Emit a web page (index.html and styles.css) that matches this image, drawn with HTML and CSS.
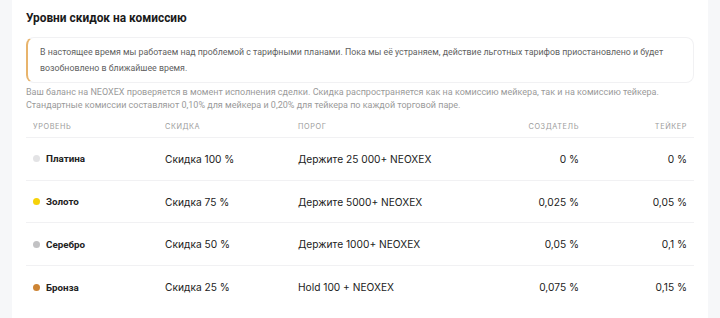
FILE: index.html
```html
<!DOCTYPE html>
<html lang="ru">
<head>
<meta charset="utf-8">
<link rel="stylesheet" href="styles.css">
</head>
<body>
<div class="page">
  <section class="card">
    <h2 class="title">Уровни скидок на комиссию</h2>
    <div class="alert">В настоящее время мы работаем над проблемой с тарифными планами. Пока мы её устраняем, действие льготных тарифов приостановлено и будет возобновлено в ближайшее время.</div>
    <p class="note">Ваш баланс на NEOXEX проверяется в момент исполнения сделки. Скидка распространяется как на комиссию мейкера, так и на комиссию тейкера. Стандартные комиссии составляют 0,10% для мейкера и 0,20% для тейкера по каждой торговой паре.</p>
    <div class="table">
      <div class="row head">
        <div class="cell">Уровень</div>
        <div class="cell">Скидка</div>
        <div class="cell">Порог</div>
        <div class="cell num">Создатель</div>
        <div class="cell num">Тейкер</div>
      </div>
      <div class="row">
        <div class="cell level"><span class="dot platinum"></span>Платина</div>
        <div class="cell">Скидка 100 %</div>
        <div class="cell">Держите 25 000+ NEOXEX</div>
        <div class="cell num">0 %</div>
        <div class="cell num">0 %</div>
      </div>
      <div class="row">
        <div class="cell level"><span class="dot gold"></span>Золото</div>
        <div class="cell">Скидка 75 %</div>
        <div class="cell">Держите 5000+ NEOXEX</div>
        <div class="cell num">0,025 %</div>
        <div class="cell num">0,05 %</div>
      </div>
      <div class="row">
        <div class="cell level"><span class="dot silver"></span>Серебро</div>
        <div class="cell">Скидка 50 %</div>
        <div class="cell">Держите 1000+ NEOXEX</div>
        <div class="cell num">0,05 %</div>
        <div class="cell num">0,1 %</div>
      </div>
      <div class="row last">
        <div class="cell level"><span class="dot bronze"></span>Бронза</div>
        <div class="cell">Скидка 25 %</div>
        <div class="cell">Hold 100 + NEOXEX</div>
        <div class="cell num">0,075 %</div>
        <div class="cell num">0,15 %</div>
      </div>
    </div>
  </section>
</div>
</body>
</html>
```
FILE: styles.css
```css
* { box-sizing: border-box; }
html, body { margin: 0; padding: 0; }
body {
  background: #f6f7f9;
  font-family: Roboto, "Noto Sans", sans-serif;
  color: #1e1e1e;
  height: 318px;
  overflow: hidden;
}
.page {
  padding: 0 12px;
  height: 100%;
}
.card {
  background: #fff;
  height: 100%;
  padding: 10px 14px 0 14px;
}
.title {
  margin: 0;
  font-size: 11.9px;
  font-weight: 700;
  line-height: 16px;
  color: #1a1a1a;
}
.alert {
  margin-top: 11px;
  border: 1px solid #f1f1f3;
  border-left: 2px solid #e8b46c;
  border-radius: 8px;
  padding: 6px 12px 6px 12px;
  font-size: 8.8px;
  line-height: 16px;
  color: #5f5f5f;
}
.note {
  margin: 3px 0 0 0;
  font-size: 9px;
  line-height: 13px;
  color: #9a9a9a;
}
.table {
  margin-top: 3px;
  font-family: Inter, Roboto, sans-serif;
}
.row {
  display: grid;
  grid-template-columns: 132px 133px 1fr 108px 108px;
  align-items: center;
  height: 42.7px;
  border-bottom: 1px solid #f1f1f3;
}
.row.head {
  height: 23px;
}
.row.last { border-bottom: none; }
.cell {
  padding: 0 7px;
  font-size: 10.2px;
  color: #222;
  white-space: nowrap;
}
.head .cell {
  font-size: 7.3px;
  letter-spacing: 0.6px;
  text-transform: uppercase;
  color: #9c9c9c;
}
.num { text-align: right; }
.level {
  display: flex;
  align-items: center;
  gap: 6px;
  font-family: Roboto, sans-serif;
  font-weight: 700;
  font-size: 9.8px;
}
.dot {
  width: 7px;
  height: 7px;
  border-radius: 50%;
  display: inline-block;
}
.platinum { background: #e3e3e5; }
.gold { background: #f6d20a; }
.silver { background: #c2c2c4; }
.bronze { background: #cd8434; }
```
